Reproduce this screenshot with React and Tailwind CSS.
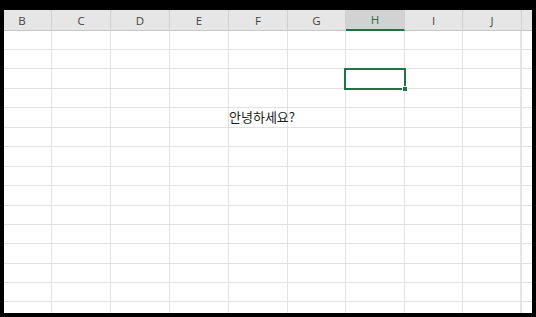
const columns = [
  { label: 'B', w: 'w-[59px]' },
  { label: 'C', w: 'w-[59px]' },
  { label: 'D', w: 'w-[59px]' },
  { label: 'E', w: 'w-[59px]' },
  { label: 'F', w: 'w-[59px]' },
  { label: 'G', w: 'w-[58px]' },
  { label: 'H', w: 'w-[59px]' },
  { label: 'I', w: 'w-[58px]' },
  { label: 'J', w: 'w-[59px]' },
  { label: '', w: 'w-[59px]' },
];

// row heights in px, bottom gridline included
const rows = [
  'h-[19px]', 'h-[19px]', 'h-[20px]', 'h-[19px]', 'h-[20px]',
  'h-[19px]', 'h-[20px]', 'h-[19px]', 'h-[20px]', 'h-[19px]',
  'h-[19px]', 'h-[20px]', 'h-[19px]', 'h-[19px]', 'h-[19px]',
];

const HeaderRow = () => (
  <div className="flex -ml-[11px] h-[21px] shrink-0">
    {columns.map((c) => {
      const active = c.label === 'H';
      return (
        <div
          key={c.label || 'k'}
          className={`${c.w} shrink-0 flex items-center justify-center border-r border-[#d0d0d0] ${
            active
              ? 'bg-[#d2d2d2] text-[#217346] border-b-2 border-b-[#217346]'
              : 'bg-[#e6e6e6] text-[#444] border-b border-b-[#c6c6c6]'
          }`}
        >
          <span className="text-[11.5px] leading-none pt-[1px]">{c.label}</span>
        </div>
      );
    })}
  </div>
);

const Row = ({ h, index }) => (
  <div className={`flex -ml-[11px] ${h} shrink-0`}>
    {columns.map((c) => (
      <div
        key={c.label || 'k'}
        className={`${c.w} shrink-0 border-r border-b border-[#e1e1e1] relative ${
          c.label === 'J' ? 'border-r-2 border-r-[#e6e6e6]' : ''
        }`}
      >
        {index === 4 && c.label === 'F' && (
          <span
            className="absolute left-[0px] top-[0px] whitespace-nowrap text-[13px] leading-[18px] text-[#1a1a1a]"
            style={{ fontFamily: '"Noto Sans CJK KR", "Noto Sans", sans-serif' }}
          >
            안녕하세요?
          </span>
        )}
      </div>
    ))}
  </div>
);

export default function App() {
  return (
    <div className="w-[536px] h-[317px] bg-black pt-[10px] pl-[4px] pr-[4px] pb-[4px] flex">
      <div
        className="flex-1 bg-white overflow-hidden relative flex flex-col"
        style={{ fontFamily: '"Open Sans", "Liberation Sans", sans-serif' }}
      >
        <HeaderRow />
        {rows.map((h, i) => (
          <Row key={i} h={h} index={i} />
        ))}

        {/* selected cell H3 */}
        <div className="absolute left-[340px] top-[58px] w-[62px] h-[22px] border-2 border-[#217346]" />
        <div className="absolute left-[398px] top-[76px] w-[6px] h-[6px] bg-[#217346] border border-white" />
      </div>
    </div>
  );
}
